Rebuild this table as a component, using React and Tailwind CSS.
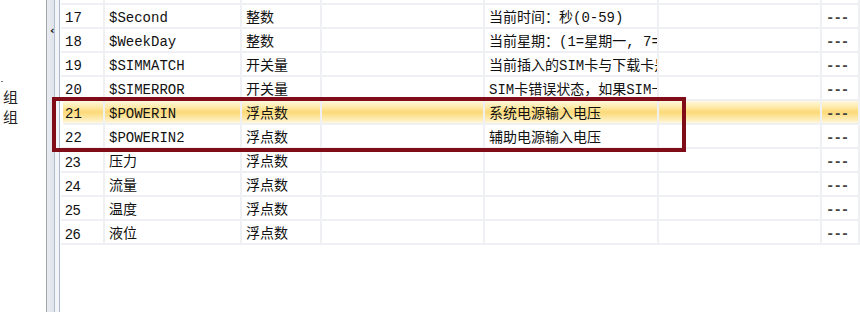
import React from "react";

const cols = ["w-[44px]", "w-[137px]", "w-[80px]", "w-[163px]", "w-[174px]", "w-[163px]", "flex-1"];

const rows = [
  { no: "17", name: "$Second", type: "整数", desc: "当前时间：秒(0-59)" },
  { no: "18", name: "$WeekDay", type: "整数", desc: "当前星期：(1=星期一, 7=星期日)" },
  { no: "19", name: "$SIMMATCH", type: "开关量", desc: "当前插入的SIM卡与下载卡是否一致" },
  { no: "20", name: "$SIMERROR", type: "开关量", desc: "SIM卡错误状态，如果SIM卡错误" },
  { no: "21", name: "$POWERIN", type: "浮点数", desc: "系统电源输入电压", selected: true },
  { no: "22", name: "$POWERIN2", type: "浮点数", desc: "辅助电源输入电压" },
  { no: "23", name: "压力", type: "浮点数", desc: "", sans: true },
  { no: "24", name: "流量", type: "浮点数", desc: "", sans: true },
  { no: "25", name: "温度", type: "浮点数", desc: "", sans: true },
  { no: "26", name: "液位", type: "浮点数", desc: "", sans: true },
];

const mono = "font-['Liberation_Mono','Noto_Sans_CJK_SC',monospace]";

const Row = ({ row }) => {
  const cells = [row.no, row.name, row.type, "", row.desc, "", "---"];
  return (
    <div
      className={`flex h-[24px] border-b-2 border-[#eef0f4] ${
        row.selected
          ? "bg-[linear-gradient(to_bottom,#fff8de_0%,#fee9a4_30%,#fcd978_50%,#fde7a4_75%,#fff7de_100%)] rounded-[2px] ml-[2px]"
          : ""
      }`}
    >
      {cells.map((text, i) => (
        <div
          key={i}
          className={`${cols[i]} ${i === 0 && row.selected ? "-ml-[2px]" : ""} shrink-0 overflow-hidden whitespace-nowrap border-r-2 border-[#eef0f4] pl-[4px] pt-[2px] leading-[22px] text-[14px] ${
            i === 6 ? "text-[#444] font-bold tracking-[-1px]" : "text-[#111]"
          } ${i === 0 && row.sans ? "font-['Liberation_Sans',sans-serif] text-[13px]" : ""}`}
        >
          {text}
        </div>
      ))}
    </div>
  );
};

export default function App() {
  return (
    <div className={`relative flex h-[312px] w-[860px] overflow-hidden bg-white ${mono}`}>
      {/* left tree panel, mostly cut off */}
      <div className="w-[46px] shrink-0 pt-[81px] pl-[3px] text-[15px] leading-[20px] text-[#222] font-['Noto_Sans_CJK_SC',sans-serif]">
        <div className="h-[6px] w-[2px] border-t border-[#777] -ml-[2px]" />
        <div>组</div>
        <div>组</div>
      </div>

      {/* splitter */}
      <div className="flex w-[15px] shrink-0">
        <div className="w-px bg-[#a4a8ae]" />
        <div className="relative w-[7px] bg-[linear-gradient(to_right,#e9ecf1,#dfe4ea)]">
          <span className="absolute left-[3px] top-[25px] text-[11px] font-bold leading-none text-black font-['DejaVu_Sans',sans-serif]">‹</span>
        </div>
        <div className="w-px bg-[#b3bfce]" />
        <div className="w-[4px] bg-[#f2f4f7]" />
        <div className="w-px bg-[#a9b9cd]" />
      </div>

      {/* variable table */}
      <div className="flex-1 overflow-hidden">
        <div className="flex h-[5px] border-b-2 border-[#eef0f4]">
          {cols.map((c, i) => (
            <div key={i} className={`${c} shrink-0 border-r-2 border-[#eef0f4]`} />
          ))}
        </div>
        {rows.map((row) => (
          <Row key={row.no} row={row} />
        ))}
        <div className="flex h-[80px]">
          {cols.map((c, i) => (
            <div key={i} className={`${c} shrink-0`} />
          ))}
        </div>
      </div>

      {/* annotation box */}
      <div className="absolute left-[52px] top-[97px] h-[55px] w-[634px] border-[4px] border-[#7f0c16]" />
    </div>
  );
}
